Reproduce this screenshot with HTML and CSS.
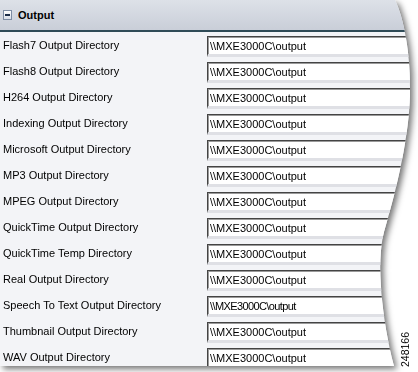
FILE: index.html
```html
<!DOCTYPE html>
<html lang="en">
<head>
    <meta charset="UTF-8">
    <title>Output Directories</title>
    <link rel="stylesheet" href="styles.css">
</head>
<body>
    <div class="sheet">
        <div class="panel">
            <div class="header">
                <span class="toggle"></span>
                <span class="title">Output</span>
            </div>
            <div class="rows">
                <div class="row"><label>Flash7 Output Directory</label><input type="text" value="\\MXE3000C\output"></div>
                <div class="row"><label>Flash8 Output Directory</label><input type="text" value="\\MXE3000C\output"></div>
                <div class="row"><label>H264 Output Directory</label><input type="text" value="\\MXE3000C\output"></div>
                <div class="row"><label>Indexing Output Directory</label><input type="text" value="\\MXE3000C\output"></div>
                <div class="row"><label>Microsoft Output Directory</label><input type="text" value="\\MXE3000C\output"></div>
                <div class="row"><label>MP3 Output Directory</label><input type="text" value="\\MXE3000C\output"></div>
                <div class="row"><label>MPEG Output Directory</label><input type="text" value="\\MXE3000C\output"></div>
                <div class="row"><label>QuickTime Output Directory</label><input type="text" value="\\MXE3000C\output"></div>
                <div class="row"><label>QuickTime Temp Directory</label><input type="text" value="\\MXE3000C\output"></div>
                <div class="row"><label>Real Output Directory</label><input type="text" value="\\MXE3000C\output"></div>
                <div class="row"><label>Speech To Text Output Directory</label><input type="text" class="narrow" value="\\MXE3000C\output"></div>
                <div class="row"><label>Thumbnail Output Directory</label><input type="text" value="\\MXE3000C\output"></div>
                <div class="row"><label>WAV Output Directory</label><input type="text" value="\\MXE3000C\output"></div>
            </div>
        </div>
    </div>
    <div class="figure-id">248166</div>
</body>
</html>
```

FILE: styles.css
```css
* {
    box-sizing: border-box;
}
body {
    margin: 0;
    width: 418px;
    height: 372px;
    background: #fff;
    font-family: Arial, "Liberation Sans", sans-serif;
    font-size: 11px;
    color: #000;
    position: relative;
    overflow: hidden;
}
.sheet {
    filter: drop-shadow(3px 3px 3px rgba(0, 0, 0, 0.55));
}
.panel {
    height: 366px;
    background: #f3f4f7;
    clip-path: path("M0 0 L395 0 C404 18 411 55 410 95 C409 135 398 185 384 232 C376 262 382 320 394 366 L0 366 Z");
}
.header {
    height: 32px;
    display: flex;
    align-items: center;
    gap: 6px;
    padding: 0 0 1px 3px;
    background: linear-gradient(#dde1e8, #c9ced8);
    border-bottom: 2px solid #2f4b57;
}
.toggle {
    width: 9px;
    height: 10px;
    border: 1px solid #7d8ca3;
    background: linear-gradient(#ffffff, #d7dde8);
    position: relative;
}
.toggle::after {
    content: "";
    position: absolute;
    left: 1px;
    right: 1px;
    top: 3px;
    height: 2px;
    background: #1b2c48;
}
.title {
    font-weight: bold;
    font-size: 11px;
}
.row {
    height: 26px;
    display: flex;
    align-items: center;
}
.row label {
    flex: 0 0 207px;
    padding-left: 3px;
    white-space: nowrap;
    overflow: hidden;
}
.row input {
    flex: 0 0 230px;
    height: 21px;
    margin-top: 2px;
    padding: 1px 0 0 2px;
    font-family: Arial, "Liberation Sans", sans-serif;
    font-size: 11px;
    color: #000;
    background: #fff;
    border-top: 1px solid #444;
    border-left: 1px solid #444;
    border-bottom: 3px solid #dfe0e5;
    border-right: 2px solid #dfe0e5;
    box-shadow: inset 1px 1px 0 #9a9a9a;
    outline: none;
}
.row input.narrow {
    letter-spacing: -0.6px;
}
.figure-id {
    position: absolute;
    left: 399px;
    top: 367px;
    transform: rotate(-90deg);
    transform-origin: left top;
    font-size: 10.5px;
}
```
